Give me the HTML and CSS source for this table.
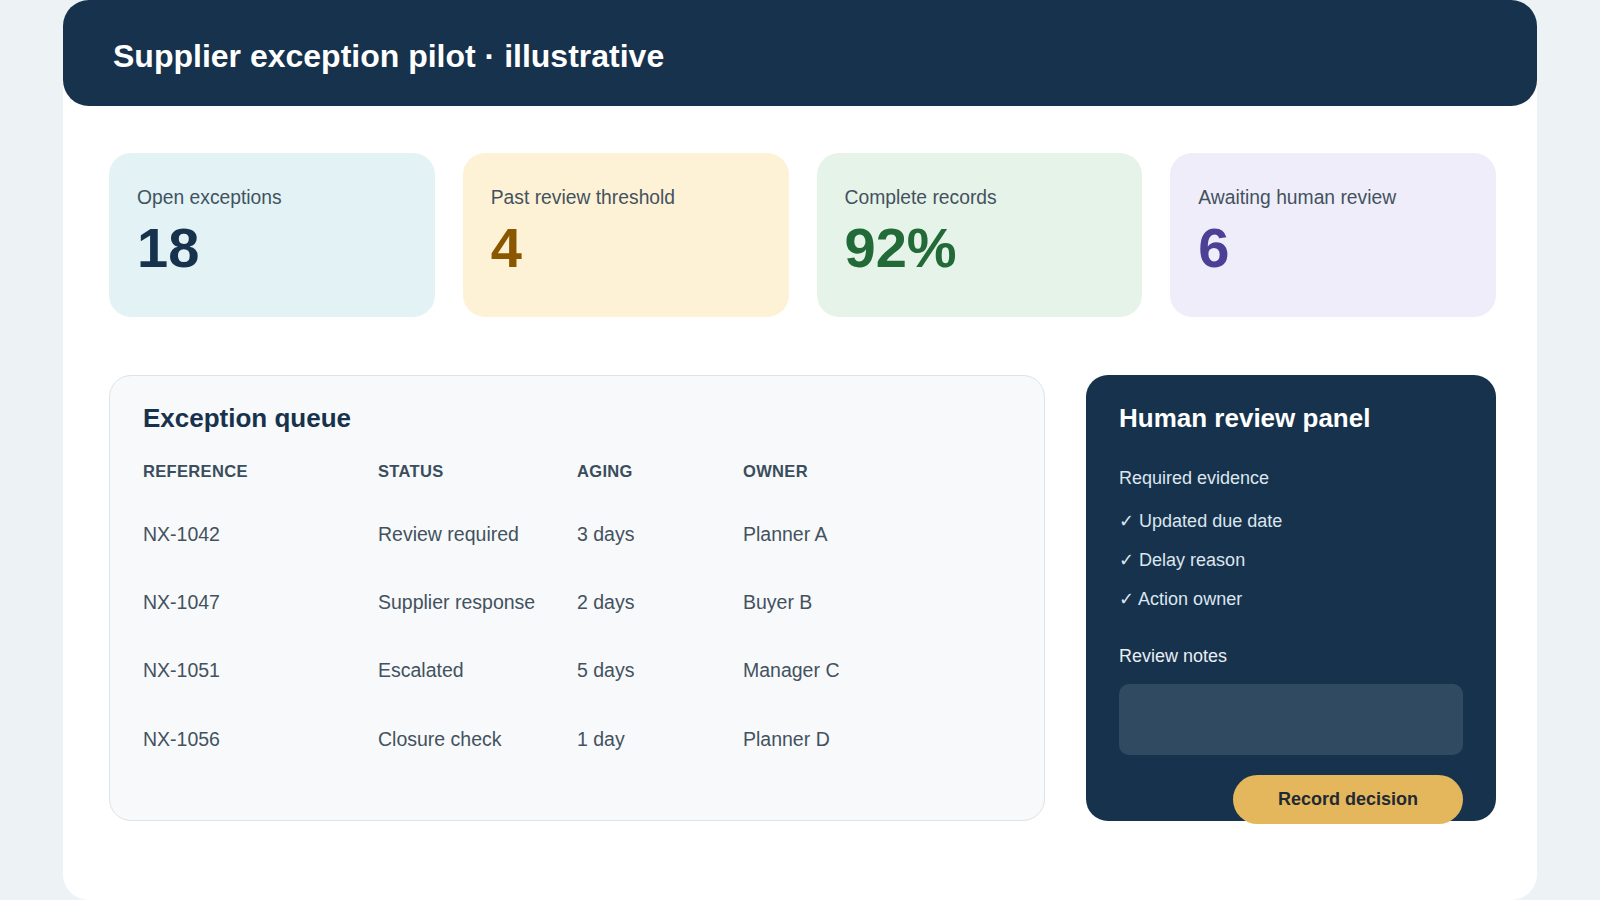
FILE: index.html
```html
<!DOCTYPE html>
<html lang="en">
<head>
<meta charset="utf-8">
<title>Supplier exception pilot</title>
<link rel="stylesheet" href="styles.css">
</head>
<body>
<div class="shell">
  <header class="topbar">
    <h1>Supplier exception pilot · illustrative</h1>
  </header>
  <main class="content">
    <section class="stats">
      <div class="stat stat-blue">
        <div class="stat-label">Open exceptions</div>
        <div class="stat-value">18</div>
      </div>
      <div class="stat stat-amber">
        <div class="stat-label">Past review threshold</div>
        <div class="stat-value">4</div>
      </div>
      <div class="stat stat-green">
        <div class="stat-label">Complete records</div>
        <div class="stat-value">92%</div>
      </div>
      <div class="stat stat-violet">
        <div class="stat-label">Awaiting human review</div>
        <div class="stat-value">6</div>
      </div>
    </section>
    <section class="lower">
      <div class="queue">
        <h2>Exception queue</h2>
        <div class="table">
          <div class="row head">
            <span>Reference</span><span>Status</span><span>Aging</span><span>Owner</span>
          </div>
          <div class="row">
            <span>NX-1042</span><span>Review required</span><span>3 days</span><span>Planner A</span>
          </div>
          <div class="row">
            <span>NX-1047</span><span>Supplier response</span><span>2 days</span><span>Buyer B</span>
          </div>
          <div class="row">
            <span>NX-1051</span><span>Escalated</span><span>5 days</span><span>Manager C</span>
          </div>
          <div class="row">
            <span>NX-1056</span><span>Closure check</span><span>1 day</span><span>Planner D</span>
          </div>
        </div>
      </div>
      <aside class="review">
        <h2>Human review panel</h2>
        <div class="review-label">Required evidence</div>
        <ul class="checks">
          <li>✓ Updated due date</li>
          <li>✓ Delay reason</li>
          <li>✓ Action owner</li>
        </ul>
        <div class="review-label notes-label">Review notes</div>
        <div class="notes"></div>
        <button class="record" type="button">Record decision</button>
      </aside>
    </section>
  </main>
</div>
</body>
</html>
```

FILE: styles.css
```css
* {
  box-sizing: border-box;
}

html, body {
  margin: 0;
  padding: 0;
}

body {
  background: #edf3f5;
  font-family: "Liberation Sans", Arial, "DejaVu Sans", sans-serif;
  color: #17324d;
  height: 900px;
  overflow: hidden;
}

.shell {
  width: 1474px;
  margin: 0 auto;
  background: #ffffff;
  border-radius: 26px;
  min-height: 900px;
}

.topbar {
  background: #17324d;
  border-radius: 26px;
  height: 106px;
  display: flex;
  align-items: center;
  padding: 6px 50px 0;
}

.topbar h1 {
  margin: 0;
  color: #ffffff;
  font-size: 32px;
  font-weight: 700;
  line-height: 1;
}

.content {
  padding: 47px 41px 0 46px;
}

.stats {
  display: grid;
  grid-template-columns: repeat(4, 1fr);
  gap: 28px;
}

.stat {
  border-radius: 22px;
  height: 164px;
  padding: 34px 28px 0 28px;
}

.stat-blue { background: #e2f2f5; }
.stat-amber { background: #fef2d6; }
.stat-green { background: #e6f3e9; }
.stat-violet { background: #efedf9; }

.stat-label {
  font-size: 19.3px;
  line-height: 22px;
  color: #43525e;
}

.stat-value {
  margin-top: 11px;
  font-size: 56px;
  line-height: 56px;
  font-weight: 700;
}

.stat-blue .stat-value { color: #17324d; }
.stat-amber .stat-value { color: #8a5700; }
.stat-green .stat-value { color: #236a39; }
.stat-violet .stat-value { color: #4b3f96; }

.lower {
  margin-top: 58px;
  display: grid;
  grid-template-columns: 1fr 410px;
  gap: 41px;
  align-items: stretch;
}

.queue {
  background: #f7f9fb;
  border: 1px solid #dde3e8;
  border-radius: 22px;
  padding: 27px 33px 47px;
}

.queue h2,
.review h2 {
  margin: 0;
  font-size: 26px;
  line-height: 31px;
  font-weight: 700;
}

.queue h2 {
  color: #17324d;
  margin-bottom: 16px;
}

.row {
  display: grid;
  grid-template-columns: 235px 199px 166px 1fr;
  padding: 23.2px 0;
  font-size: 19.5px;
  line-height: 22px;
  color: #43525e;
}

.row.head {
  padding: 12px 0 18.5px;
  font-size: 16.5px;
  line-height: 19px;
  font-weight: 700;
  text-transform: uppercase;
  letter-spacing: 0.02em;
  color: #3a4d5c;
}

.review {
  background: #17324d;
  border-radius: 22px;
  padding: 28px 33px 32px;
  color: #ffffff;
  display: flex;
  flex-direction: column;
}

.review h2 {
  color: #ffffff;
  margin-bottom: 34px;
}

.review-label {
  font-size: 18px;
  line-height: 21px;
  color: #dce6ee;
}

.checks {
  list-style: none;
  margin: 22px 0 0;
  padding: 0;
}

.checks li {
  font-size: 18px;
  line-height: 21px;
  color: #dce6ee;
  margin-bottom: 18px;
}

.checks li:last-child {
  margin-bottom: 0;
}

.notes-label {
  margin-top: 36px;
  color: #e8eef3;
}

.notes {
  margin-top: 17px;
  height: 71px;
  background: #304b61;
  border-radius: 10px;
}

.record {
  align-self: flex-end;
  margin-top: 20px;
  margin-bottom: -38px;
  height: 49px;
  padding: 0 45px;
  border: none;
  border-radius: 25px;
  background: #e5b75d;
  color: #1f2a33;
  font-family: "Liberation Sans", Arial, sans-serif;
  font-size: 18px;
  font-weight: 700;
}
```
